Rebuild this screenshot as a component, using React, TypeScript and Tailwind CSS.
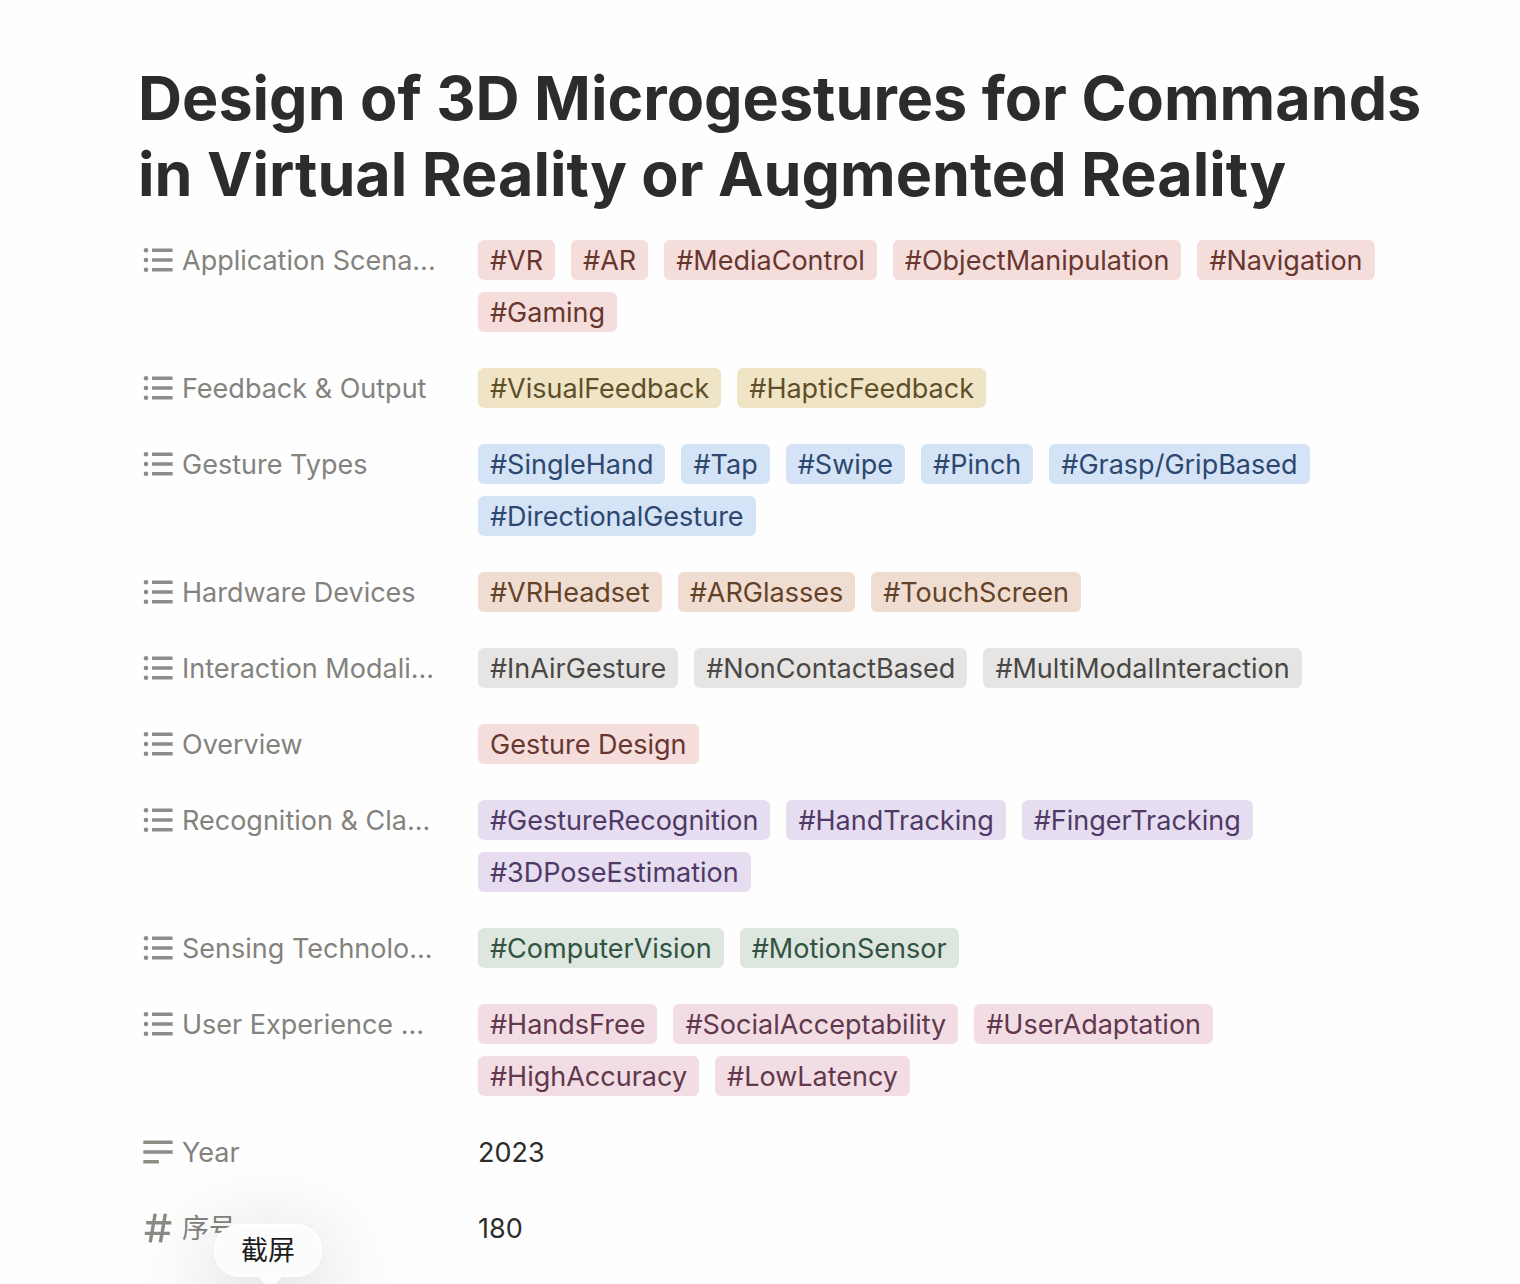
import type { ReactNode } from "react";

type Tone = "red" | "yellow" | "blue" | "brown" | "gray" | "purple" | "green" | "pink";

const tones: Record<Tone, string> = {
  red: "bg-[#f5dddb] text-[#67372f]",
  yellow: "bg-[#f0e4c6] text-[#5f4f28]",
  blue: "bg-[#d5e3f6] text-[#2c486f]",
  brown: "bg-[#f0ddd2] text-[#644228]",
  gray: "bg-[#e6e5e3] text-[#494846]",
  purple: "bg-[#e6ddf0] text-[#4f3a67]",
  green: "bg-[#dde6df] text-[#31533f]",
  pink: "bg-[#f2dde4] text-[#61384d]",
};

const groups: { label: string; tone: Tone; tags: string[] }[] = [
  { label: "Application Scena...", tone: "red", tags: ["#VR", "#AR", "#MediaControl", "#ObjectManipulation", "#Navigation", "#Gaming"] },
  { label: "Feedback & Output", tone: "yellow", tags: ["#VisualFeedback", "#HapticFeedback"] },
  { label: "Gesture Types", tone: "blue", tags: ["#SingleHand", "#Tap", "#Swipe", "#Pinch", "#Grasp/GripBased", "#DirectionalGesture"] },
  { label: "Hardware Devices", tone: "brown", tags: ["#VRHeadset", "#ARGlasses", "#TouchScreen"] },
  { label: "Interaction Modali...", tone: "gray", tags: ["#InAirGesture", "#NonContactBased", "#MultiModalInteraction"] },
  { label: "Overview", tone: "red", tags: ["Gesture Design"] },
  { label: "Recognition & Cla...", tone: "purple", tags: ["#GestureRecognition", "#HandTracking", "#FingerTracking", "#3DPoseEstimation"] },
  { label: "Sensing Technolo...", tone: "green", tags: ["#ComputerVision", "#MotionSensor"] },
  { label: "User Experience ...", tone: "pink", tags: ["#HandsFree", "#SocialAcceptability", "#UserAdaptation", "#HighAccuracy", "#LowLatency"] },
];

function ListIcon() {
  return (
    <svg viewBox="0 0 32 32" className="size-8 shrink-0" fill="#8d8b86" aria-hidden="true">
      <circle cx="4" cy="6.3" r="2.3" />
      <circle cx="4" cy="16" r="2.3" />
      <circle cx="4" cy="25.7" r="2.3" />
      <rect x="10" y="4.6" width="20.6" height="3.4" rx="0.5" />
      <rect x="10" y="14.3" width="20.6" height="3.4" rx="0.5" />
      <rect x="10" y="24" width="20.6" height="3.4" rx="0.5" />
    </svg>
  );
}

function TextIcon() {
  return (
    <svg viewBox="0 0 32 32" className="size-8 shrink-0" fill="#8d8b86" aria-hidden="true">
      <rect x="1.3" y="4.6" width="29.3" height="3.4" rx="0.5" />
      <rect x="1.3" y="14.3" width="29.3" height="3.4" rx="0.5" />
      <rect x="1.3" y="24" width="15.6" height="3.4" rx="0.5" />
    </svg>
  );
}

function NumberIcon() {
  return (
    <svg viewBox="0 0 32 32" className="size-8 shrink-0" fill="none" stroke="#8d8b86" strokeWidth="3.4" aria-hidden="true">
      <path d="M13.2 1.8 8.2 30.4M23.4 1.8 18.4 30.4M4.2 10.7H29.2M2.8 21.4H27.8" />
    </svg>
  );
}

function Property({ icon, label, children, overlay }: { icon: ReactNode; label: string; children: ReactNode; overlay?: ReactNode }) {
  return (
    <div className="flex items-start">
      <dt className="relative flex h-10 w-[340px] shrink-0 items-center gap-2 pl-1 whitespace-nowrap text-[#84827d]">
        {icon}
        <span>{label}</span>
        {overlay}
      </dt>
      <dd className="flex min-h-10 flex-1 flex-wrap items-center gap-x-4 gap-y-3">{children}</dd>
    </div>
  );
}

function Tooltip() {
  return (
    <div
      role="tooltip"
      className="absolute top-4 left-19 flex h-[53px] w-27 items-center justify-center rounded-[26px] border-2 border-white bg-[#fcfcfc] text-[#1c1c1c] shadow-[0_24px_90px_4px_rgba(0,0,0,0.2)]"
    >
      截屏
      <svg viewBox="0 0 44 12" className="absolute top-full left-8 h-3 w-11" fill="#fdfdfd" aria-hidden="true">
        <path d="M0 0C8 0 11 3 15 7C18 10 20 12 22 12C24 12 26 10 29 7C33 3 36 0 44 0Z" />
      </svg>
    </div>
  );
}

export default function App() {
  return (
    <main className="min-h-screen overflow-hidden bg-[#fefefe] pt-15 pr-20 pb-9 pl-[138px] font-['Inter','Noto_Sans_CJK_SC',sans-serif] text-[27px] leading-[41px] text-[#2c2c2b]">
      <h1 className="text-[61px] leading-[76px] font-bold">
        Design of 3D Microgestures for Commands in Virtual Reality or Augmented Reality
      </h1>
      <dl className="mt-7 flex flex-col gap-9">
        {groups.map((group) => (
          <Property key={group.label} icon={<ListIcon />} label={group.label}>
            {group.tags.map((tag) => (
              <span key={tag} className={`h-10 rounded-md px-3 whitespace-nowrap ${tones[group.tone]}`}>
                {tag}
              </span>
            ))}
          </Property>
        ))}
        <Property icon={<TextIcon />} label="Year">
          <span className="h-10">2023</span>
        </Property>
        <Property icon={<NumberIcon />} label="序号" overlay={<Tooltip />}>
          <span className="h-10">180</span>
        </Property>
      </dl>
    </main>
  );
}
